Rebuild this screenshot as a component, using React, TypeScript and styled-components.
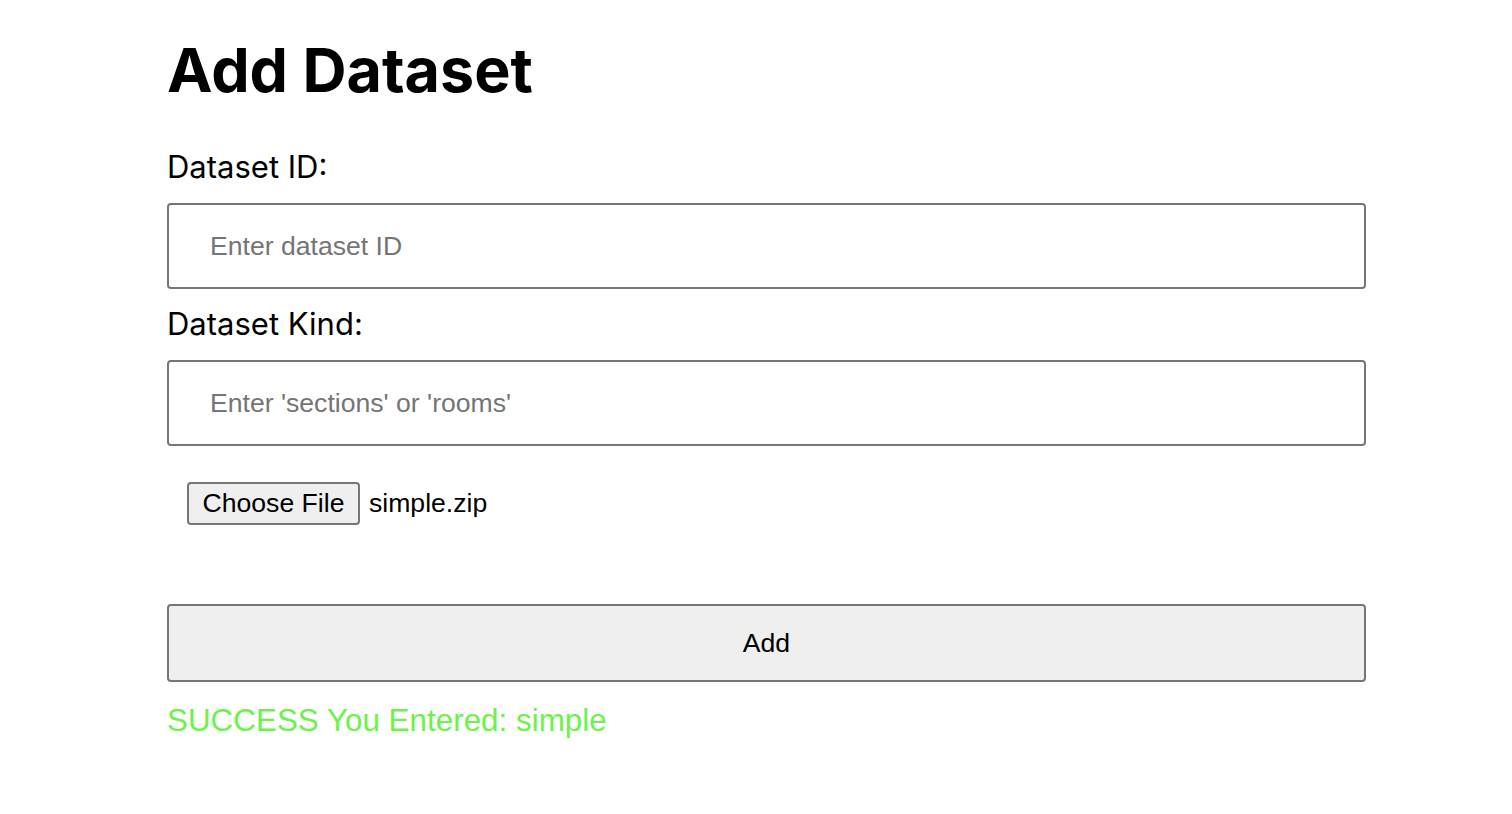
import styled, { createGlobalStyle } from "styled-components";
import { useState } from "react";

const GlobalStyle = createGlobalStyle`
    body {
        margin: 0;
        background: #ffffff;
        font-family: Inter, "Liberation Sans", sans-serif;
        color: #000000;
    }
`

const PageDiv = styled.div`
    width: 1199px;
    margin-left: 167px;
    padding-top: 30px;
    display: flex;
    flex-direction: column;
`
const TitleHeading = styled.h1`
    margin: 0;
    font-family: Inter, sans-serif;
    font-weight: 700;
    font-size: 61px;
    line-height: 80px;
`
const FieldLabel = styled.label<{ $top: number }>`
    display: block;
    margin-top: ${p => p.$top}px;
    font-family: Inter, sans-serif;
    font-size: 31px;
    line-height: 36px;
    font-weight: 400;
`
const TextInput = styled.input`
    box-sizing: border-box;
    width: 100%;
    height: 86px;
    margin-top: 18px;
    padding: 0 41px;
    border: 2px solid #767676;
    border-radius: 4px;
    font-family: "Liberation Sans", Arial, sans-serif;
    font-size: 26.6px;
    color: #000;
    outline: none;
    &::placeholder {
        color: #757575;
    }
`
const FileRow = styled.div`
    display: flex;
    align-items: center;
    gap: 9px;
    margin-top: 36px;
    margin-left: 20px;
    font-family: "Liberation Sans", Arial, sans-serif;
    font-size: 26.6px;
`
const FileButton = styled.button`
    box-sizing: border-box;
    height: 43px;
    width: 173px;
    padding: 0;
    border: 2px solid #767676;
    border-radius: 4px;
    background: #efefef;
    font-family: "Liberation Sans", Arial, sans-serif;
    font-size: 26.6px;
    color: #000;
`
const FileName = styled.span`
    color: #000;
`
const AddButton = styled.button`
    box-sizing: border-box;
    width: 100%;
    height: 78px;
    margin-top: 79px;
    border: 2px solid #767676;
    border-radius: 4px;
    background: #efefef;
    font-family: "Liberation Sans", Arial, sans-serif;
    font-size: 26.6px;
    color: #000;
`
const StatusText = styled.div`
    margin-top: 21px;
    font-family: "Liberation Sans", Arial, sans-serif;
    font-size: 31.4px;
    line-height: 36px;
    color: #6cf24a;
`

export default function App() {
    const [datasetId, setDatasetId] = useState("")
    const [datasetKind, setDatasetKind] = useState("")
    return (
        <>
            <GlobalStyle />
            <PageDiv>
                <TitleHeading>Add Dataset</TitleHeading>
                <FieldLabel $top={39}>Dataset ID:</FieldLabel>
                <TextInput
                    placeholder="Enter dataset ID"
                    value={datasetId}
                    onChange={e => setDatasetId(e.target.value)}
                />
                <FieldLabel $top={17}>Dataset Kind:</FieldLabel>
                <TextInput
                    placeholder="Enter 'sections' or 'rooms'"
                    value={datasetKind}
                    onChange={e => setDatasetKind(e.target.value)}
                />
                <FileRow>
                    <FileButton>Choose File</FileButton>
                    <FileName>simple.zip</FileName>
                </FileRow>
                <AddButton>Add</AddButton>
                <StatusText>SUCCESS You Entered: simple</StatusText>
            </PageDiv>
        </>
    )
}
